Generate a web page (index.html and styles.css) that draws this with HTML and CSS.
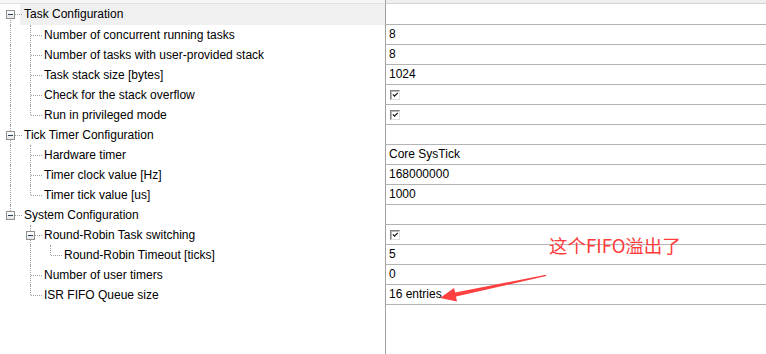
FILE: index.html
```html
<!DOCTYPE html>
<html lang="en">
<head>
  <meta charset="UTF-8" />
  <title>RTOS Configuration</title>
  <link rel="stylesheet" href="styles.css">
</head>
<body>
  <div class="sheet">
    <div class="top"><div class="top-l"></div><div class="top-r"></div></div>

    <div class="row first">
      <div class="name"><span class="g g-start"><i class="box"></i></span><span class="label sel">Task Configuration</span></div>
      <div class="val"></div>
    </div>
    <div class="row">
      <div class="name"><span class="g g-pipe"></span><span class="g g-tee"></span><span class="label">Number of concurrent running tasks</span></div>
      <div class="val">8</div>
    </div>
    <div class="row">
      <div class="name"><span class="g g-pipe"></span><span class="g g-tee"></span><span class="label">Number of tasks with user-provided stack</span></div>
      <div class="val">8</div>
    </div>
    <div class="row">
      <div class="name"><span class="g g-pipe"></span><span class="g g-tee"></span><span class="label">Task stack size [bytes]</span></div>
      <div class="val">1024</div>
    </div>
    <div class="row">
      <div class="name"><span class="g g-pipe"></span><span class="g g-tee"></span><span class="label">Check for the stack overflow</span></div>
      <div class="val"><span class="cb"></span></div>
    </div>
    <div class="row">
      <div class="name"><span class="g g-pipe"></span><span class="g g-ell"></span><span class="label">Run in privileged mode</span></div>
      <div class="val"><span class="cb"></span></div>
    </div>

    <div class="row">
      <div class="name"><span class="g g-tee"><i class="box"></i></span><span class="label">Tick Timer Configuration</span></div>
      <div class="val"></div>
    </div>
    <div class="row">
      <div class="name"><span class="g g-pipe"></span><span class="g g-tee"></span><span class="label">Hardware timer</span></div>
      <div class="val">Core SysTick</div>
    </div>
    <div class="row">
      <div class="name"><span class="g g-pipe"></span><span class="g g-tee"></span><span class="label">Timer clock value [Hz]</span></div>
      <div class="val">168000000</div>
    </div>
    <div class="row">
      <div class="name"><span class="g g-pipe"></span><span class="g g-ell"></span><span class="label">Timer tick value [us]</span></div>
      <div class="val">1000</div>
    </div>

    <div class="row">
      <div class="name"><span class="g g-ell"><i class="box"></i></span><span class="label">System Configuration</span></div>
      <div class="val"></div>
    </div>
    <div class="row">
      <div class="name"><span class="g"></span><span class="g g-tee"><i class="box"></i></span><span class="label">Round-Robin Task switching</span></div>
      <div class="val"><span class="cb"></span></div>
    </div>
    <div class="row">
      <div class="name"><span class="g"></span><span class="g g-pipe"></span><span class="g g-ell"></span><span class="label">Round-Robin Timeout [ticks]</span></div>
      <div class="val">5</div>
    </div>
    <div class="row">
      <div class="name"><span class="g"></span><span class="g g-tee"></span><span class="label">Number of user timers</span></div>
      <div class="val">0</div>
    </div>
    <div class="row">
      <div class="name"><span class="g"></span><span class="g g-ell"></span><span class="label">ISR FIFO Queue size</span></div>
      <div class="val">16 entries</div>
    </div>

    <div class="rest"><div></div><div class="rest-r"></div></div>

    <!-- screenshot annotation -->
    <div class="note">这个FIFO溢出了</div>
    <svg class="arrow" width="766" height="354" viewBox="0 0 766 354">
      <polygon fill="#ff4040" points="440,298 454,288 455.2,292.6 546,274.8 546.2,276 456,296.6 457,301.6"/>
    </svg>
  </div>
</body>
</html>
```

FILE: styles.css
```css
body {
  margin: 0;
  background: white;
  font-family: "Liberation Sans", Arial, sans-serif;
  font-size: 12px;
  color: black;
}

.sheet {
  position: relative;
  width: 766px;
  height: 354px;
  overflow: hidden;
  display: flex;
  flex-direction: column;
}

.top {
  display: grid;
  grid-template-columns: 385px 1fr;
  height: 4px;
}

.top-l {
  background: #f7f7f7;
  border-bottom: 1px solid #e2e2e2;
}

.top-r {
  background: #efefef;
  border-left: 1px solid #a0a0a0;
  border-bottom: 1px solid #d3d3d3;
}

.row {
  display: grid;
  grid-template-columns: 385px 1fr;
  height: 20px;
}

.row.first {
  height: 21px;
}

.name {
  display: flex;
  height: 100%;
  line-height: 20px;
}

.label {
  padding-left: 4px;
  white-space: nowrap;
}

.label.sel {
  flex: 1;
  background: #f0f0f0;
}

.val {
  border-left: 1px solid #a0a0a0;
  border-bottom: 1px solid #b4b4b4;
  padding-left: 3px;
  line-height: 19px;
  display: flex;
  align-items: center;
  white-space: nowrap;
}

/* tree guides */
.g {
  position: relative;
  width: 20px;
  flex: none;
}

.g-pipe::before,
.g-tee::before,
.g-ell::before,
.g-start::before {
  content: "";
  position: absolute;
  left: 10px;
  top: 0;
  bottom: 0;
  border-left: 1px dotted #a0a0a0;
}

.g-start::before {
  top: 10px;
}

.g-ell::before {
  bottom: auto;
  height: 10px;
}

.g-tee::after,
.g-ell::after,
.g-start::after {
  content: "";
  position: absolute;
  left: 11px;
  right: -2px;
  top: 10px;
  border-top: 1px dotted #a0a0a0;
}

.box {
  position: absolute;
  left: 6px;
  top: 6px;
  width: 7px;
  height: 7px;
  border: 1px solid #919191;
  background: linear-gradient(#ffffff, #e4e4e4);
  z-index: 1;
}

.box::after {
  content: "";
  position: absolute;
  left: 1px;
  top: 3px;
  width: 5px;
  height: 1px;
  background: #2a3f5a;
}

.cb {
  position: relative;
  width: 10px;
  height: 10px;
  box-sizing: border-box;
  margin-left: 1px;
  border-style: solid;
  border-width: 1px;
  border-color: #808080 #e0e0e0 #e0e0e0 #808080;
  background: white;
  box-shadow: inset 1px 1px 0 #b8b8b8;
}

.cb::after {
  content: "";
  position: absolute;
  left: 2px;
  top: 1px;
  width: 4px;
  height: 2px;
  border-left: 1.5px solid black;
  border-bottom: 1.5px solid black;
  transform: rotate(-45deg);
  transform-origin: 3px 2px;
}

.rest {
  flex: 1;
  display: grid;
  grid-template-columns: 385px 1fr;
}

.rest-r {
  border-left: 1px solid #a0a0a0;
}

/* annotation over the grid */
.note {
  position: absolute;
  left: 549px;
  top: 233px;
  font-family: "Noto Sans CJK SC", sans-serif;
  font-size: 18.5px;
  line-height: 24px;
  color: #ff3b3b;
}

.arrow {
  position: absolute;
  left: 0;
  top: 0;
}
```
